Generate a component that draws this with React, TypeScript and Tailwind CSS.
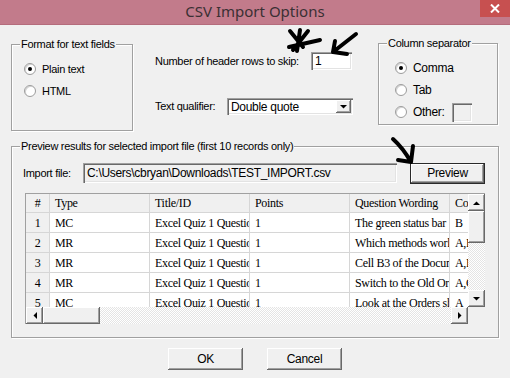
import React from "react";

const raised =
  "bg-[#f0f0f0] shadow-[inset_-1px_-1px_0_#696969,inset_1px_1px_0_#ffffff,inset_-2px_-2px_0_#a0a0a0,inset_2px_2px_0_#f0f0f0]";
const sunken =
  "shadow-[inset_1px_1px_0_#a0a0a0,inset_2px_2px_0_#696969,inset_-1px_-1px_0_#ffffff,inset_-2px_-2px_0_#e3e3e3]";
const checker =
  "bg-[image:repeating-conic-gradient(#ffffff_0_25%,#e4e4e4_0_50%)] bg-[length:2px_2px]";

const Group = ({ label, className, children }: { label: string; className: string; children?: React.ReactNode }) => (
  <div className={`relative border border-[#a0a0a0] shadow-[inset_1px_1px_0_#ffffff,1px_1px_0_#ffffff] ${className}`}>
    <span className="absolute left-[8px] top-[-8px] bg-[#f0f0f0] px-[1px] leading-[14px] whitespace-nowrap">{label}</span>
    {children}
  </div>
);

const Radio = ({ checked }: { checked?: boolean }) => (
  <span className="flex items-center justify-center w-[12px] h-[12px] rounded-full bg-white border border-[#9c9c9c] shadow-[inset_1px_1px_0_#d4d4d4]">
    {checked && <span className="w-[4px] h-[4px] rounded-full bg-black" />}
  </span>
);

const Tri = ({ dir }: { dir: "up" | "down" | "left" | "right" }) => {
  const pts = {
    up: "0,4 7,4 3.5,0.5",
    down: "0,0 7,0 3.5,3.5",
    left: "4,0 4,7 0.5,3.5",
    right: "0,0 0,7 3.5,3.5",
  }[dir];
  const w = dir === "up" || dir === "down" ? 7 : 4;
  const h = dir === "up" || dir === "down" ? 4 : 7;
  return (
    <svg width={w} height={h} viewBox={`0 0 ${w} ${h}`}>
      <polygon points={pts} fill="#000" />
    </svg>
  );
};

const rows = [
  ["1", "MC", "Excel Quiz 1 Question", "1", "The green status bar", "B"],
  ["2", "MR", "Excel Quiz 1 Question", "1", "Which methods work", "A,B"],
  ["3", "MR", "Excel Quiz 1 Question", "1", "Cell B3 of the Document", "A,B"],
  ["4", "MR", "Excel Quiz 1 Question", "1", "Switch to the Old Orders", "A,C"],
  ["5", "MC", "Excel Quiz 1 Question", "1", "Look at the Orders sheet", "A"],
];
const headers = ["#", "Type", "Title/ID", "Points", "Question Wording", "Correct"];
const widths = ["w-[24px]", "w-[100px]", "w-[100px]", "w-[100px]", "w-[100px]", "w-[60px]"];

const Grid = () => (
  <div className="ml-[13px] mt-[10px] w-[460px] h-[131px] flex border-l border-t border-[#a0a0a0] bg-white" style={{ fontFamily: '"Liberation Serif", "Times New Roman", serif' }}>
    <div className="w-[442px] flex flex-col">
      <div className="h-[113px] overflow-hidden">
        <div className="flex h-[19px] w-[600px] bg-[#f0f0f0]">
          {headers.map((h, i) => (
            <div key={h} className={`${widths[i]} shrink-0 flex items-center border-r border-b border-[#d6d6d6] text-[12px] whitespace-nowrap overflow-hidden ${i === 0 ? "justify-center" : "pl-[5px]"}`}>
              {h}
            </div>
          ))}
        </div>
        {rows.map((r) => (
          <div key={r[0]} className="flex h-[20px] w-[600px]">
            {r.map((c, i) => (
              <div key={i} className={`${widths[i]} shrink-0 flex items-center border-r border-b border-[#d6d6d6] text-[12px] whitespace-nowrap overflow-hidden ${i === 0 ? "justify-center bg-[#f0f0f0]" : "pl-[5px] bg-white"}`}>
                {c}
              </div>
            ))}
          </div>
        ))}
      </div>
      <div className={`h-[17px] flex ${checker}`}>
        <div className={`w-[17px] h-[17px] flex items-center justify-center ${raised}`}><Tri dir="left" /></div>
        <div className={`w-[57px] h-[17px] ${raised}`} />
        <div className="flex-1" />
        <div className={`w-[17px] h-[17px] flex items-center justify-center ${raised}`}><Tri dir="right" /></div>
      </div>
    </div>
    <div className="w-[17px] flex flex-col">
      <div className={`h-[113px] flex flex-col ${checker}`}>
        <div className={`h-[17px] flex items-center justify-center ${raised}`}><Tri dir="up" /></div>
        <div className={`h-[32px] ${raised}`} />
        <div className="flex-1" />
        <div className={`h-[17px] flex items-center justify-center ${raised}`}><Tri dir="down" /></div>
      </div>
      <div className="h-[17px] bg-[#f0f0f0]" />
    </div>
  </div>
);

const Button = ({ label, def, className }: { label: string; def?: boolean; className: string }) => (
  <div className={`flex items-center justify-center ${def ? "border border-[#2a2a2a]" : ""} ${className}`}>
    <div className={`w-full h-full flex items-center justify-center ${raised}`}>{label}</div>
  </div>
);

export default function App() {
  return (
    <div
      className="relative w-[510px] h-[378px] overflow-hidden bg-[#f0f0f0] text-black text-[11px] tracking-[-0.3px]"
      style={{ fontFamily: '"Liberation Sans", Arial, sans-serif' }}
    >
      <div className="relative h-[25px] flex items-center justify-center bg-[#c27b8b] border-b border-[#b46c7c]">
        <span className="text-[15px] tracking-normal text-[#3a3034] -mt-[2px]" style={{ fontFamily: '"Noto Sans", sans-serif' }}>
          CSV Import Options
        </span>
        <div className="absolute right-0 top-0 w-[30px] h-[17px] bg-[#c75050] flex items-center justify-center">
          <svg width="10" height="9" viewBox="0 0 10 9">
            <path d="M1 0.5 L9 8.5 M9 0.5 L1 8.5" stroke="#fff" strokeWidth="2" />
          </svg>
        </div>
      </div>

      <div className="pl-[11px]">
        <div className="flex mt-[18px]">
          <Group label="Format for text fields" className="mt-[1px] w-[122px] h-[87px] pt-[13px] pl-[12px]">
            <div className="h-[22px] flex items-center gap-[6px]"><Radio checked /> Plain text</div>
            <div className="h-[22px] flex items-center gap-[6px]"><Radio /> HTML</div>
          </Group>

          <div className="ml-[22px] w-[223px]">
            <div className="mt-[9px] h-[18px] flex items-center">
              <span className="w-[156px]">Number of header rows to skip:</span>
              <div className={`w-[41px] h-[18px] bg-white flex items-center pl-[4px] text-[12px] ${sunken}`}>1</div>
            </div>
            <div className="mt-[28px] h-[17px] flex items-center">
              <span className="w-[72px]">Text qualifier:</span>
              <div className={`w-[126px] h-[17px] bg-white flex items-center pl-[4px] text-[12px] ${sunken}`}>
                <span className="flex-1">Double quote</span>
                <div className={`w-[15px] h-[13px] mr-[2px] flex items-center justify-center ${raised}`}><Tri dir="down" /></div>
              </div>
            </div>
          </div>

          <Group label="Column separator" className="w-[120px] h-[82px] pt-[13px] pl-[16px]">
            <div className="h-[22px] flex items-center gap-[6px] text-[12px]"><Radio checked /> Comma</div>
            <div className="h-[22px] flex items-center gap-[6px] text-[12px]"><Radio /> Tab</div>
            <div className="h-[22px] flex items-center gap-[6px] text-[12px]">
              <Radio />
              <span className="w-[33px]">Other:</span>
              <div className={`w-[20px] h-[19px] bg-[#f0f0f0] ${sunken}`} />
            </div>
          </Group>
        </div>

        <Group label="Preview results for selected import file (first 10 records only)" className="mt-[15px] w-[488px] h-[192px] pt-[16px]">
          <div className="h-[20px] flex items-center">
            <span className="pl-[11px] w-[71px]">Import file:</span>
            <div className={`w-[314px] h-[20px] bg-[#f0f0f0] flex items-center pl-[4px] text-[12px] ${sunken}`}>
              C:\Users\cbryan\Downloads\TEST_IMPORT.csv
            </div>
            <Button label="Preview" def className="ml-[13px] w-[75px] h-[21px] text-[12px]" />
          </div>
          <Grid />
        </Group>
      </div>

      <div className="mt-[10px] flex justify-center gap-[24px] text-[12px]">
        <Button label="OK" className="w-[75px] h-[22px]" />
        <Button label="Cancel" className="w-[75px] h-[22px]" />
      </div>

      <svg className="absolute inset-0 pointer-events-none" width="510" height="378" viewBox="0 0 510 378">
        <g stroke="#000" strokeWidth="4" strokeLinecap="round" fill="none">
          <path d="M290 31 L303 47 M300 30 L297 51 M289 47 L320 40 M308 31 L293 50" />
          <path d="M356 34 L333 52 M333 52 L335 41 M333 52 L347 54" />
          <path d="M393 139 Q403 148 411 162 M411 162 L413 146 M411 162 L398 160" />
        </g>
      </svg>
    </div>
  );
}
